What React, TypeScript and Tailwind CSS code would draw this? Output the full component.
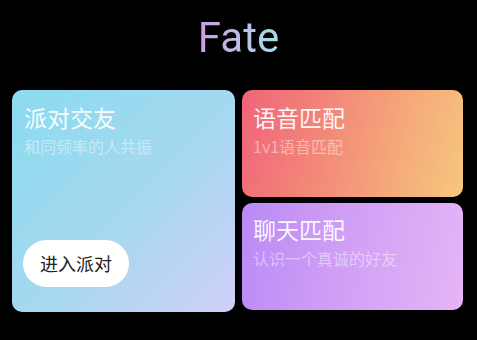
import React from "react";

const cjk = { fontFamily: '"Noto Sans CJK SC", "Noto Sans", sans-serif' };

export default function App() {
  return (
    <div className="w-[477px] h-[340px] bg-black overflow-hidden">
      <div className="pt-[17px] flex justify-center">
        <h1
          className="text-[42px] leading-[42px] font-normal bg-gradient-to-r from-[#cc9de2] to-[#a3dde8] bg-clip-text text-transparent"
          style={{ fontFamily: 'Roboto, "Noto Sans", sans-serif' }}
        >
          Fate
        </h1>
      </div>
      <div className="mt-[31px] pl-[12px] grid grid-cols-[223px_221px] gap-x-[7px]" style={cjk}>
        <div className="h-[222px] rounded-[10px] bg-[linear-gradient(135deg,#8adbef_0%,#a7d8f0_55%,#d0cff7_100%)] px-[12px] pt-[12px] pb-[25px] flex flex-col">
          <div className="text-[23px] leading-[30px] text-white/95">派对交友</div>
          <div className="mt-[4px] text-[16px] leading-[20px] text-white/45">和同频率的人共振</div>
          <button className="mt-auto self-start w-[106px] h-[47px] rounded-full bg-white text-[18px] text-[#222] -ml-[1px]">
            进入派对
          </button>
        </div>
        <div className="flex flex-col gap-[6px]">
          <div className="h-[107px] rounded-[10px] bg-[linear-gradient(105deg,#f0647a_0%,#f38a78_40%,#f5aa7a_70%,#f6c77e_100%)] px-[11px] pt-[12px]">
            <div className="text-[23px] leading-[30px] text-white/95">语音匹配</div>
            <div className="mt-[4px] text-[16px] leading-[20px] text-white/45">1v1语音匹配</div>
          </div>
          <div className="h-[107px] rounded-[10px] bg-[linear-gradient(100deg,#b98af6_0%,#d09ff5_45%,#e6b4f6_100%)] px-[11px] pt-[11px]">
            <div className="text-[23px] leading-[30px] text-white/95">聊天匹配</div>
            <div className="mt-[4px] text-[16px] leading-[20px] text-white/45">认识一个真诚的好友</div>
          </div>
        </div>
      </div>
    </div>
  );
}
